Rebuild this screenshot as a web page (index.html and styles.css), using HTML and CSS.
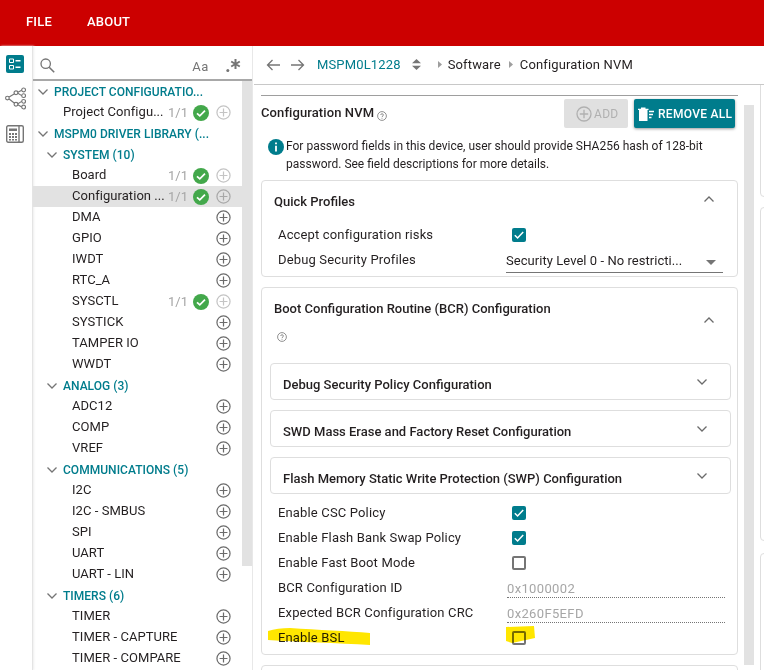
FILE: index.html
```html
<!DOCTYPE html>
<html lang="en">
<head>
<meta charset="utf-8">
<title>SysConfig</title>
<link rel="stylesheet" href="styles.css">
</head>
<body>
<svg class="defs" width="0" height="0">
  <symbol id="plus" viewBox="0 0 16 16"><circle cx="8" cy="8" r="7" fill="none" stroke="currentColor" stroke-width="1.3"/><path d="M8 3.8v8.4M3.8 8h8.4" fill="none" stroke="currentColor" stroke-width="1.3"/></symbol>
  <symbol id="ok" viewBox="0 0 16 16"><circle cx="8" cy="8" r="8" fill="#43a84b"/><path d="M4 8.3l2.8 2.6L12 5.6" fill="none" stroke="#fff" stroke-width="1.7"/></symbol>
  <symbol id="chev" viewBox="0 0 12 8"><path d="M1.5 1.5L6 6l4.5-4.5" fill="none" stroke="currentColor" stroke-width="1.3"/></symbol>
  <symbol id="chevup" viewBox="0 0 12 8"><path d="M1.5 6.5L6 2l4.5 4.5" fill="none" stroke="currentColor" stroke-width="1.3"/></symbol>
  <symbol id="check" viewBox="0 0 14 14"><path d="M2.8 7.2l2.8 2.8 5.6-6" fill="none" stroke="#fff" stroke-width="1.5"/></symbol>
  <symbol id="help" viewBox="0 0 10 10"><circle cx="5" cy="5" r="4.4" fill="none" stroke="#757575" stroke-width=".8"/><path d="M3.7 4c0-1.700 2.700-1.700 2.700 0 0 1-1.400 1-1.400 2.100M5 6.900v.8" fill="none" stroke="#757575" stroke-width=".8"/></symbol>
</svg>
<header class="topbar">
  <span class="menu">FILE</span>
  <span class="menu">ABOUT</span>
</header>
<div class="app">
  <nav class="rail">
    <svg class="rail-icon" width="18" height="18" viewBox="0 0 18 18"><rect width="18" height="18" rx="2" fill="#007c8c"/><path d="M3.500 4h4v3.500h-4zM3.500 10.500h4V14h-4z" fill="none" stroke="#fff"/><path d="M9.500 5.700h5M9.500 12.200h5" stroke="#fff" stroke-width="1.500"/></svg>
    <svg class="rail-icon" width="21" height="23" viewBox="0 0 22 24"><g fill="none" stroke="#757575" stroke-width="1.200"><circle cx="2.500" cy="11.500" r="1.900"/><circle cx="19.500" cy="3" r="2"/><circle cx="19.500" cy="9" r="2"/><circle cx="19.500" cy="15" r="2"/><circle cx="19.500" cy="21" r="2"/><circle cx="11.500" cy="6" r="2"/><circle cx="11.500" cy="18" r="2"/><path d="M4.300 10.500L10 7M4.300 12.500L10 17M13.500 5.500L17.500 3.300M13.500 6.500L17.500 9M13.500 17.500L17.500 15M13.500 18.500L17.500 21"/></g></svg>
    <svg class="rail-icon" width="18" height="18" viewBox="0 0 18 18"><rect x=".7" y=".7" width="16.600" height="16.600" rx="1.500" fill="none" stroke="#757575" stroke-width="1.400"/><path d="M13 1v16" stroke="#757575" stroke-width="1.400"/><path d="M3 3.500h8v2.500H3z" fill="#757575"/><path d="M3 8h2v2H3zM6 8h2v2H6zM9 8h2v2H9zM3 11h2v2H3zM6 11h2v2H6zM9 11h2v2H9zM3 14h2v1.500H3zM6 14h2v1.500H6zM9 14h2v1.500H9z" fill="#757575"/></svg>
  </nav>
  <aside class="tree-panel">
    <div class="tree-tools">
      <svg width="15" height="15" viewBox="0 0 15 15"><circle cx="5.700" cy="5.700" r="4.700" fill="none" stroke="#757575" stroke-width="1.300"/><path d="M9.200 9.200l5 5" stroke="#757575" stroke-width="1.600"/></svg>
      <span class="aa">Aa</span>
      <svg class="star" width="15" height="15" viewBox="0 0 15 15"><circle cx="1.800" cy="12.500" r="1.500" fill="#757575"/><path d="M9.500 1v10M5.200 3.500l8.600 5M13.800 3.500l-8.600 5" stroke="#757575" stroke-width="2"/></svg>
    </div>
    <div class="tree-body">
      <ul class="tree">
        <li class="row head lv0"><svg class="twist"><use href="#chev"/></svg><span class="name">PROJECT CONFIGURATIO...</span></li>
        <li class="row item lv1"><span class="name">Project Configu...</span><span class="count">1/1</span><svg class="ok"><use href="#ok"/></svg><svg class="add off"><use href="#plus"/></svg></li>
        <li class="row head lv0"><svg class="twist"><use href="#chev"/></svg><span class="name">MSPM0 DRIVER LIBRARY (...</span></li>
        <li class="row head lv1h"><svg class="twist"><use href="#chev"/></svg><span class="name">SYSTEM (10)</span></li>
        <li class="row item"><span class="name">Board</span><span class="count">1/1</span><svg class="ok"><use href="#ok"/></svg><svg class="add off"><use href="#plus"/></svg></li>
        <li class="row item selected"><span class="name">Configuration ...</span><span class="count">1/1</span><svg class="ok"><use href="#ok"/></svg><svg class="add off"><use href="#plus"/></svg></li>
        <li class="row item"><span class="name">DMA</span><svg class="add"><use href="#plus"/></svg></li>
        <li class="row item"><span class="name">GPIO</span><svg class="add"><use href="#plus"/></svg></li>
        <li class="row item"><span class="name">IWDT</span><svg class="add"><use href="#plus"/></svg></li>
        <li class="row item"><span class="name">RTC_A</span><svg class="add"><use href="#plus"/></svg></li>
        <li class="row item"><span class="name">SYSCTL</span><span class="count">1/1</span><svg class="ok"><use href="#ok"/></svg><svg class="add off"><use href="#plus"/></svg></li>
        <li class="row item"><span class="name">SYSTICK</span><svg class="add"><use href="#plus"/></svg></li>
        <li class="row item"><span class="name">TAMPER IO</span><svg class="add"><use href="#plus"/></svg></li>
        <li class="row item"><span class="name">WWDT</span><svg class="add"><use href="#plus"/></svg></li>
        <li class="row head lv1h"><svg class="twist"><use href="#chev"/></svg><span class="name">ANALOG (3)</span></li>
        <li class="row item"><span class="name">ADC12</span><svg class="add"><use href="#plus"/></svg></li>
        <li class="row item"><span class="name">COMP</span><svg class="add"><use href="#plus"/></svg></li>
        <li class="row item"><span class="name">VREF</span><svg class="add"><use href="#plus"/></svg></li>
        <li class="row head lv1h"><svg class="twist"><use href="#chev"/></svg><span class="name">COMMUNICATIONS (5)</span></li>
        <li class="row item"><span class="name">I2C</span><svg class="add"><use href="#plus"/></svg></li>
        <li class="row item"><span class="name">I2C - SMBUS</span><svg class="add"><use href="#plus"/></svg></li>
        <li class="row item"><span class="name">SPI</span><svg class="add"><use href="#plus"/></svg></li>
        <li class="row item"><span class="name">UART</span><svg class="add"><use href="#plus"/></svg></li>
        <li class="row item"><span class="name">UART - LIN</span><svg class="add"><use href="#plus"/></svg></li>
        <li class="row head lv1h"><svg class="twist"><use href="#chev"/></svg><span class="name">TIMERS (6)</span></li>
        <li class="row item"><span class="name">TIMER</span><svg class="add"><use href="#plus"/></svg></li>
        <li class="row item"><span class="name">TIMER - CAPTURE</span><svg class="add"><use href="#plus"/></svg></li>
        <li class="row item"><span class="name">TIMER - COMPARE</span><svg class="add"><use href="#plus"/></svg></li>
      </ul>
      <div class="track tree-track"></div>
    </div>
  </aside>
  <main class="main">
    <div class="crumbs">
      <svg class="arrow" width="14" height="12" viewBox="0 0 14 12"><path d="M14 6H1.500M6.500 1L1.500 6l5 5" fill="none" stroke="#757575" stroke-width="1.300"/></svg>
      <svg class="arrow" width="14" height="12" viewBox="0 0 14 12"><path d="M0 6h12.500M7.500 1l5 5-5 5" fill="none" stroke="#757575" stroke-width="1.300"/></svg>
      <span class="device">MSPM0L1228</span>
      <svg class="updown" width="9" height="11" viewBox="0 0 9 11"><path d="M4.500 0L9 4.300H0zM4.500 11L0 6.700h9z" fill="#757575"/></svg>
      <svg class="tri tri-first" width="4" height="7" viewBox="0 0 4 7"><path d="M0 0l4 3.500L0 7z" fill="#9e9e9e"/></svg>
      <span class="crumb">Software</span>
      <svg class="tri" width="4" height="7" viewBox="0 0 4 7"><path d="M0 0l4 3.500L0 7z" fill="#9e9e9e"/></svg>
      <span class="crumb">Configuration NVM</span>
    </div>
    <div class="content">
      <div class="pane">
        <div class="pane-head">
          <h1 class="title">Configuration NVM</h1>
          <svg class="help"><use href="#help"/></svg>
          <button class="btn btn-add"><svg width="16" height="16"><use href="#plus"/></svg>ADD</button>
          <button class="btn btn-remove"><svg width="16" height="14" viewBox="0 0 16 14"><path d="M1 3h8.500V14H1zM3 0.500h4.500V2H3z M0 1.800h10.500V3H0z" fill="#fff"/><path d="M11 4.500h5M11 7.500h4M11 10.500h2.500" stroke="#fff" stroke-width="1.300"/></svg>REMOVE ALL</button>
        </div>
        <div class="note">
          <svg class="info" width="16" height="16" viewBox="0 0 16 16"><circle cx="8" cy="8" r="8" fill="#007c8c"/><path d="M8 6.800V12.500M8 3.500V5.300" stroke="#fff" stroke-width="1.800"/></svg>
          <p>For password fields in this device, user should provide SHA256 hash of 128-bit<br>password. See field descriptions for more details.</p>
        </div>
        <section class="card quick">
          <div class="card-head"><h2>Quick Profiles</h2><svg class="cv"><use href="#chevup"/></svg></div>
          <div class="fields">
            <label class="field"><span>Accept configuration risks</span><i class="cb on"><svg width="14" height="14"><use href="#check"/></svg></i></label>
            <div class="field"><span>Debug Security Profiles</span><div class="select">Security Level 0 - No restricti...<b></b></div></div>
          </div>
        </section>
        <section class="card bcr">
          <div class="card-head"><h2>Boot Configuration Routine (BCR) Configuration<svg class="help block"><use href="#help"/></svg></h2><svg class="cv"><use href="#chevup"/></svg></div>
          <div class="sub"><h3>Debug Security Policy Configuration</h3><svg class="cv"><use href="#chev"/></svg></div>
          <div class="sub"><h3>SWD Mass Erase and Factory Reset Configuration</h3><svg class="cv"><use href="#chev"/></svg></div>
          <div class="sub"><h3>Flash Memory Static Write Protection (SWP) Configuration</h3><svg class="cv"><use href="#chev"/></svg></div>
          <div class="fields">
            <label class="field"><span>Enable CSC Policy</span><i class="cb on"><svg width="14" height="14"><use href="#check"/></svg></i></label>
            <label class="field"><span>Enable Flash Bank Swap Policy</span><i class="cb on"><svg width="14" height="14"><use href="#check"/></svg></i></label>
            <label class="field"><span>Enable Fast Boot Mode</span><i class="cb"></i></label>
            <div class="field"><span>BCR Configuration ID</span><div class="ro">0x1000002</div></div>
            <div class="field"><span>Expected BCR Configuration CRC</span><div class="ro">0x260F5EFD</div></div>
            <label class="field"><span>Enable BSL</span><i class="cb"></i></label>
          </div>
        </section>
        <section class="card next"></section>
      </div>
      <div class="track main-track"></div>
      <div class="side">
        <div class="side-card first"></div>
        <div class="side-card middle"></div>
        <div class="side-card"></div>
      </div>
      <svg class="marker mark-a" width="103" height="18" viewBox="0 0 103 18"><path d="M0 3C6 1 14 0 22 0C50 2 80 3 102 5L102 17C70 15 30 14 0 12z" fill="#ffe600"/></svg>
      <svg class="marker mark-b" width="29" height="19" viewBox="0 0 29 19"><path d="M0 1L28 0L29 12L6 17L0 15z" fill="#ffe600"/></svg>
    </div>
  </main>
</div>
</body>
</html>
```
FILE: styles.css
```css
* { box-sizing: border-box; }
html, body { margin: 0; height: 100%; overflow: hidden; background: #fff; }
body { font-family: Roboto, "Liberation Sans", sans-serif; font-size: 13px; color: #231f20; }
.defs { position: absolute; }

.topbar { height: 46px; background: #cc0000; display: flex; align-items: center; padding-left: 26px; gap: 35px; }
.menu { color: #fff; font-size: 13px; font-weight: 500; letter-spacing: .2px; position: relative; top: -2px; }

.app { display: flex; height: 624px; }
.rail { width: 33px; flex: none; display: flex; flex-direction: column; align-items: center; padding-top: 9px; border-right: 1px solid #e4e4e4; box-shadow: 1px 0 2px #eee; padding-right: 2px; }
.rail-icon { flex: none; display: block; margin-bottom: 15px; }
.rail-icon:first-child { margin-bottom: 14px; }

.tree-panel { width: 220px; flex: none; display: flex; flex-direction: column; border-right: 1px solid #e8e8e8; }
.tree-tools { height: 35px; flex: none; display: flex; align-items: center; padding: 6px 11px 0 7px; border-bottom: 2px solid #a8a8a8; }
.aa { margin-left: auto; margin-right: 17px; color: #757575; font-size: 13px; letter-spacing: .6px; position: relative; top: 1px; }
.tree-body { flex: 1; display: flex; overflow: hidden; }
.tree { list-style: none; margin: 0; padding: 0; width: 209px; flex: none; }
.track { background: #e2e2e2; width: 10px; flex: none; }
.tree-track { height: 485px; }
.row { height: 21px; display: flex; align-items: center; padding-right: 11px; white-space: nowrap; }
.row .name { letter-spacing: .05px; }
.item .name { position: relative; top: -1px; }
.item { padding-left: 39px; }
.item.lv1 { padding-left: 30px; }
.head .name { color: #007c8c; font-weight: 500; font-size: 12px; position: relative; top: .5px; letter-spacing: .03px; }
.head.lv0 { padding-left: 4px; }
.head.lv1h { padding-left: 13px; }
.twist { width: 12px; height: 8px; color: #757575; margin-right: 5px; flex: none; }
.selected { background: #e2e2e2; }
.count { margin-left: auto; color: #a6a6a6; margin-right: 5px; }
.ok { width: 16px; height: 16px; margin-right: 7px; flex: none; }
.add { width: 15px; height: 15px; color: #6b6b6b; margin-left: auto; flex: none; }
.ok + .add { margin-left: 0; }
.add.off { color: #c4c4c4; }
.selected .add.off { color: #a8a8a8; }

.main { flex: 1; min-width: 0; display: flex; flex-direction: column; padding-left: 1px; }
.crumbs { height: 39px; flex: none; display: flex; align-items: center; padding: 0 0 1px 12px; border-bottom: 1px solid #c8c8c8; font-size: 13px; letter-spacing: .15px; }
.arrow { margin-right: 11px; }
.device { color: #007c8c; margin-left: 1px; }
.updown { margin-left: 11px; }
.tri { margin: 0 7px 0 8px; }
.tri-first { margin-left: 17px; margin-right: 6px; }
.content { flex: 1; display: flex; min-height: 0; overflow: hidden; position: relative; }
.pane { width: 485px; flex: none; padding: 10px 0 0 7px; }
.pane-head { height: 35px; display: flex; align-items: center; border-top: 1px solid #9e9e9e; padding-top: 1px; width: 477px; }
.title { margin: 0 0 2px; font-size: 13px; font-weight: 500; letter-spacing: .1px; }
.help { width: 10px; height: 10px; margin: 4px 0 0 3px; flex: none; }
.help.block { display: block; margin: 16px 0 0 3px; }
.btn { height: 29px; border: 0; border-radius: 2px; display: inline-flex; align-items: center; font: 500 12px Roboto, sans-serif; letter-spacing: .3px; padding: 0; }
.btn-add { width: 64px; margin-left: auto; background: #e0e0e0; color: #b0b0b0; gap: 2px; padding-left: 12px; font-weight: 400; }
.btn-remove { width: 101px; margin: 0 3px 0 6px; background: #007c8c; color: #fff; box-shadow: 0 1px 3px rgba(0,0,0,.4); gap: 4px; padding-left: 4px; }
.note { display: flex; padding: 7px 0 0 7px; height: 50px; font-size: 12px; line-height: 18px; }
.note p { margin: 0 0 0 2px; }
.info { flex: none; margin-top: 2px; }
.card { width: 477px; border: 1px solid #dedede; border-radius: 4px; }
.card-head { display: flex; justify-content: space-between; padding: 0 22px 0 12px; }
h2, h3 { margin: 0; font-size: 13px; font-weight: 500; }
.cv { width: 12px; height: 8px; color: #6b6b6b; flex: none; }
.quick { height: 97px; margin-bottom: 10px; }
.quick .card-head { padding-top: 13px; height: 41px; }
.quick .cv { margin-top: 1px; }
.bcr { height: 368px; margin-bottom: 10px; padding-top: 13px; }
.bcr .card-head { height: 62px; }
.bcr .card-head .cv { margin-top: 15px; }
.sub { width: 461px; height: 37px; margin: 0 0 10px 8px; border: 1px solid #dedede; border-radius: 4px; display: flex; justify-content: space-between; padding: 13px 22px 0 12px; }
.sub .cv { margin-top: 1px; }
.bcr .fields { margin-top: -4px; }
.fields { padding: 0 0 0 16px; }
.field { height: 25px; display: flex; align-items: center; letter-spacing: .15px; }
.field > span { width: 228px; flex: none; }
.cb { width: 14px; height: 14px; border-radius: 2px; border: 2px solid #757575; margin-left: 6px; display: block; }
.cb.on { background: #007c8c; border: 0; }
.cb svg { display: block; }
.select { width: 217px; height: 23px; margin-top: 3px; border-bottom: 1px solid #757575; font-size: 13px; line-height: 22px; position: relative; white-space: nowrap; letter-spacing: .05px; }
.select b { position: absolute; right: 7px; top: 10px; border: 5px solid transparent; border-top-color: #757575; border-bottom: 0; }
.ro { width: 218px; height: 19px; margin: 1px 0 0 1px; border-bottom: 1px dotted #757575; color: #a6a6a6; line-height: 19px; letter-spacing: .35px; }
.next { height: 40px; }
.main-track { margin-left: 5px; margin-top: 20px; height: 560px; }
.side { width: 10px; padding: 0 0 0 6px; flex: none; }
.side-card { border: 1px solid #dedede; border-radius: 4px; width: 30px; height: 140px; margin-bottom: 12px; }
.side-card.first { height: 140px; margin: -28px 0 10px; }
.side-card.middle { height: 334px; }
.marker { position: absolute; mix-blend-mode: multiply; }
.mark-a { left: 14px; top: 543px; }
.mark-b { left: 252px; top: 541px; }
```
